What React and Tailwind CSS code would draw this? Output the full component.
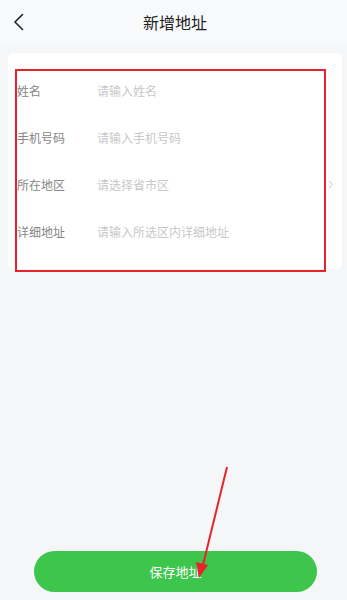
import React from "react";

const rows = [
  { label: "姓名", ph: "请输入姓名" },
  { label: "手机号码", ph: "请输入手机号码" },
  { label: "所在地区", ph: "请选择省市区", arrow: true },
  { label: "详细地址", ph: "请输入所选区内详细地址" },
];

export default function App() {
  return (
    <div
      className="relative w-[347px] h-[600px] bg-[#f5f6f8] flex flex-col overflow-hidden"
      style={{ fontFamily: '"Noto Sans CJK SC", "Noto Sans", sans-serif' }}
    >
      <div className="h-[44px] bg-[#f8f9fa] flex items-center relative shrink-0">
        <div className="pl-[13px] flex items-center">
          <svg width="11" height="18" viewBox="0 0 11 18" fill="none">
            <path d="M9.5 1.5 L2 9 L9.5 16.5" stroke="#222" strokeWidth="1.6" strokeLinecap="round" strokeLinejoin="round" />
          </svg>
        </div>
        <div className="absolute inset-0 flex items-center justify-center text-[16px] text-[#222] pl-[3px]">
          新增地址
        </div>
      </div>

      <div className="mx-[8px] mt-[9px] bg-white rounded-[5px] py-[14px] w-[334px]">
        {rows.map((r) => (
          <div key={r.label} className="h-[47px] flex items-center pl-[9px] pr-[8px] text-[12px]">
            <div className="w-[80px] text-[#858585]">{r.label}</div>
            <div className="flex-1 text-[#c8c8c8]">{r.ph}</div>
            {r.arrow && (
              <svg width="6" height="9" viewBox="0 0 6 9" fill="none">
                <path d="M1 1 L4.5 4.5 L1 8" stroke="#c4c4c4" strokeWidth="1" />
              </svg>
            )}
          </div>
        ))}
      </div>

      <div className="flex-1" />

      <div className="flex justify-center pb-[8px] pl-[4px]">
        <div className="w-[283px] h-[41px] rounded-full bg-[#3dc54c] flex items-center justify-center text-white text-[13px]">
          保存地址
        </div>
      </div>

      <div className="absolute left-[15px] top-[69px] w-[311px] h-[203px] border-2 border-[#e8242a] pointer-events-none" />

      <svg className="absolute left-0 top-0 pointer-events-none" width="347" height="600">
        <line x1="227" y1="467" x2="203" y2="565" stroke="#e8242a" strokeWidth="2" />
        <polygon points="199,578 196,562 208,565" fill="#e8242a" />
      </svg>
    </div>
  );
}
